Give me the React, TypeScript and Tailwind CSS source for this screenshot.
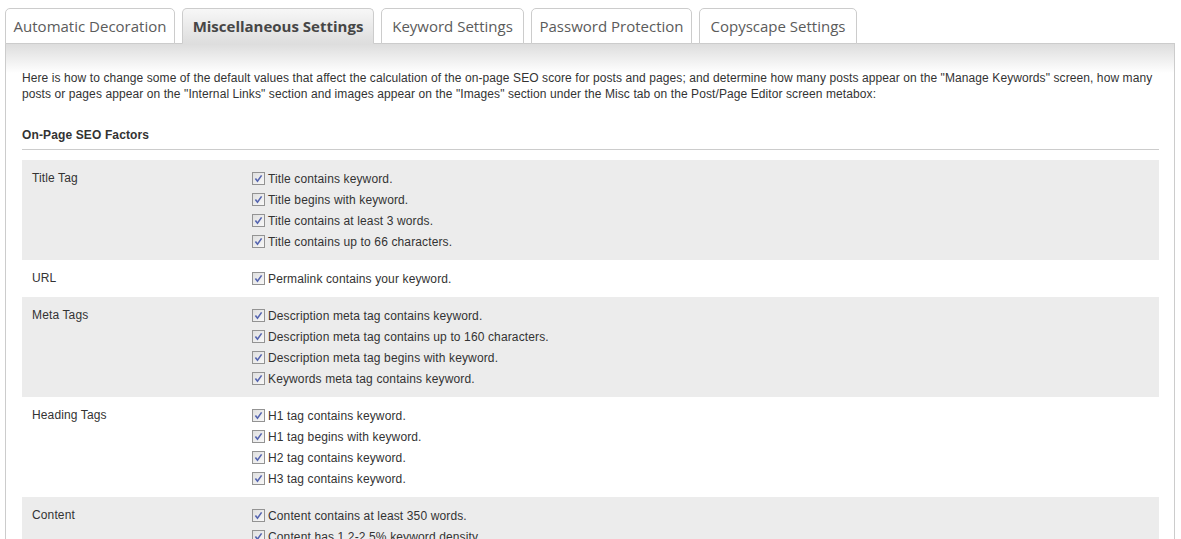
const tabs = [
  { label: "Automatic Decoration", w: "w-[170px]" },
  { label: "Miscellaneous Settings", w: "w-[192px]", active: true },
  { label: "Keyword Settings", w: "w-[143px]" },
  { label: "Password Protection", w: "w-[161px]" },
  { label: "Copyscape Settings", w: "w-[158px]" },
];

const factors = [
  {
    name: "Title Tag",
    items: [
      "Title contains keyword.",
      "Title begins with keyword.",
      "Title contains at least 3 words.",
      "Title contains up to 66 characters.",
    ],
  },
  { name: "URL", items: ["Permalink contains your keyword."] },
  {
    name: "Meta Tags",
    items: [
      "Description meta tag contains keyword.",
      "Description meta tag contains up to 160 characters.",
      "Description meta tag begins with keyword.",
      "Keywords meta tag contains keyword.",
    ],
  },
  {
    name: "Heading Tags",
    items: [
      "H1 tag contains keyword.",
      "H1 tag begins with keyword.",
      "H2 tag contains keyword.",
      "H3 tag contains keyword.",
    ],
  },
  {
    name: "Content",
    items: [
      "Content contains at least 350 words.",
      "Content has 1.2-2.5% keyword density.",
      "Content contains keyword in first 50-100 words.",
      "Content contains keyword in last 50-100 words.",
    ],
  },
];

const CheckBox = () => (
  <svg width="13" height="13" viewBox="0 0 13 13" className="shrink-0">
    <defs>
      <linearGradient id="cbg" x1="0" y1="0" x2="1" y2="1">
        <stop offset="0" stopColor="#dedede" />
        <stop offset="1" stopColor="#f9f9f9" />
      </linearGradient>
    </defs>
    <rect x="0.5" y="0.5" width="12" height="12" fill="url(#cbg)" stroke="#939393" />
    <path d="M3.4 6.4 L5.5 9.2 L9.6 3.4" fill="none" stroke="#5565b0" strokeWidth="1.6" />
  </svg>
);

export default function App() {
  return (
    <div className="w-[1181px] min-h-[539px] bg-white pt-[8px] pl-[5px] font-['Liberation_Sans',Arial,sans-serif] text-[12px] text-[#333] tracking-[0.13px]">
      {/* Tabs */}
      <div className="flex gap-[7px] relative z-10 -mb-px tracking-normal">
        {tabs.map((t) => (
          <div
            key={t.label}
            className={`${t.w} h-[36px] flex items-center justify-center rounded-t-[5px] border border-[#cccccc] font-['Open_Sans',sans-serif] text-[15px] ${
              t.active
                ? "bg-gradient-to-b from-[#f7f7f7] to-[#dedede] border-b-[#dedede] font-bold text-[#464646]"
                : "bg-white text-[#5b5b5b]"
            }`}
          >
            {t.label}
          </div>
        ))}
      </div>

      {/* Panel */}
      <div className="w-[1170px] border border-[#cccccc] border-b-0 bg-[linear-gradient(to_bottom,#dddddd,#ffffff_29px)] pt-[26px] pl-[16px] pr-[15px]">
        <p className="leading-[16px] tracking-[0.09px]">
          Here is how to change some of the default values that affect the calculation of the on-page SEO score for posts and pages; and determine how many posts appear on the "Manage Keywords" screen, how many posts or pages appear on the "Internal Links" section and images appear on the "Images" section under the Misc tab on the Post/Page Editor screen metabox:
        </p>

        <h3 className="mt-[25px] pb-[6px] border-b border-[#cccccc] font-bold leading-[16px]">
          On-Page SEO Factors
        </h3>

        <div className="mt-[10px]">
          {factors.map((f, i) => (
            <div
              key={f.name}
              className={`flex py-[8px] ${i % 2 === 0 ? "bg-[#ececec]" : "bg-white"}`}
            >
              <div className="w-[230px] pl-[10px] leading-[21px]">{f.name}</div>
              <div className="flex flex-col">
                {f.items.map((item) => (
                  <label key={item} className="flex items-center gap-[3px] h-[21px]">
                    <CheckBox />
                    <span>{item}</span>
                  </label>
                ))}
              </div>
            </div>
          ))}
        </div>
      </div>
    </div>
  );
}
